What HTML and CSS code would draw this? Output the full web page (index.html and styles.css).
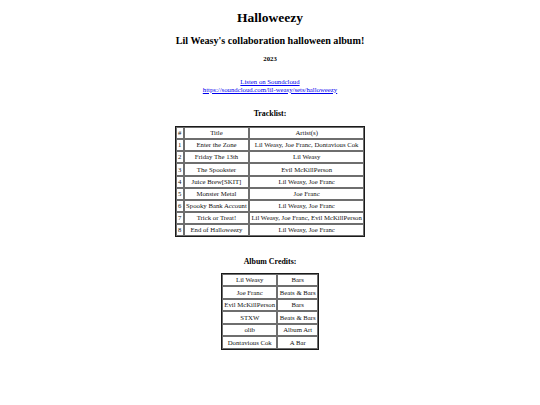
FILE: index.html
```html
<!DOCTYPE html>
<html lang="en">
<head>
<meta charset="utf-8">
<title>Halloweezy</title>
<link rel="stylesheet" href="styles.css">
</head>
<body>
<main class="page">
  <h1 class="title">Halloweezy</h1>
  <h2 class="subtitle">Lil Weasy's collaboration halloween album!</h2>
  <h4 class="year">2023</h4>
  <p class="links">
    <a href="#">Listen on Soundcloud</a><br>
    <a href="#">https://soundcloud.com/lil-weasy/sets/halloweezy</a>
  </p>

  <h3 class="section tracklist-title">Tracklist:</h3>
  <table class="grid tracklist">
    <tr><td class="num">#</td><td>Title</td><td>Artist(s)</td></tr>
    <tr><td class="num">1</td><td>Enter the Zone</td><td>Lil Weasy, Joe Franc, Dontavious Cok</td></tr>
    <tr><td class="num">2</td><td>Friday The 13th</td><td>Lil Weasy</td></tr>
    <tr><td class="num">3</td><td>The Spookster</td><td>Evil McKillPerson</td></tr>
    <tr><td class="num">4</td><td>Juice Brew[SKIT]</td><td>Lil Weasy, Joe Franc</td></tr>
    <tr><td class="num">5</td><td>Monster Metal</td><td>Joe Franc</td></tr>
    <tr><td class="num">6</td><td>Spooky Bank Account</td><td>Lil Weasy, Joe Franc</td></tr>
    <tr><td class="num">7</td><td>Trick or Treat!</td><td>Lil Weasy, Joe Franc, Evil McKillPerson</td></tr>
    <tr><td class="num">8</td><td>End of Halloweezy</td><td>Lil Weasy, Joe Franc</td></tr>
  </table>

  <h3 class="section credits-title">Album Credits:</h3>
  <table class="grid credits">
    <tr><td>Lil Weasy</td><td>Bars</td></tr>
    <tr><td>Joe Franc</td><td>Beats &amp; Bars</td></tr>
    <tr><td>Evil McKillPerson</td><td>Bars</td></tr>
    <tr><td>STXW</td><td>Beats &amp; Bars</td></tr>
    <tr><td>olib</td><td>Album Art</td></tr>
    <tr><td>Dontavious Cok</td><td>A Bar</td></tr>
  </table>
</main>
</body>
</html>
```

FILE: styles.css
```css
html {
  background: #ffffff;
}

body {
  margin: 3.4px;
  font-family: "Liberation Serif", "Times New Roman", serif;
  font-size: 6.75px;
  color: #000000;
}

.page {
  display: flex;
  flex-direction: column;
  align-items: center;
  text-align: center;
}

.title {
  font-size: 13.5px;
  margin: 6.5px 0 0;
}

.subtitle {
  font-size: 10.125px;
  margin: 9px 0 0;
}

.year {
  font-size: 6.75px;
  margin: 8.7px 0 0;
}

.links {
  margin: 16.4px 0 0;
  line-height: 7.75px;
}

.links a {
  color: #0000ee;
  text-decoration: underline;
}

.section {
  font-size: 7.9px;
  margin: 0 0 7.7px;
}

.tracklist-title {
  margin-top: 15.9px;
}

.credits-title {
  margin-top: 20px;
  margin-bottom: 6.5px;
}

.grid {
  border-collapse: separate;
  border-spacing: 0;
  border: 1px solid #1a1a1a;
}

.grid td {
  border: 1px solid #6e6e6e;
  padding: 1.2px 1.3px;
  line-height: 7.75px;
  text-align: center;
  color: #111111;
}

.grid td.num {
  text-align: left;
}

.credits td {
  padding-top: 1.4px;
  padding-bottom: 1.4px;
}
```
